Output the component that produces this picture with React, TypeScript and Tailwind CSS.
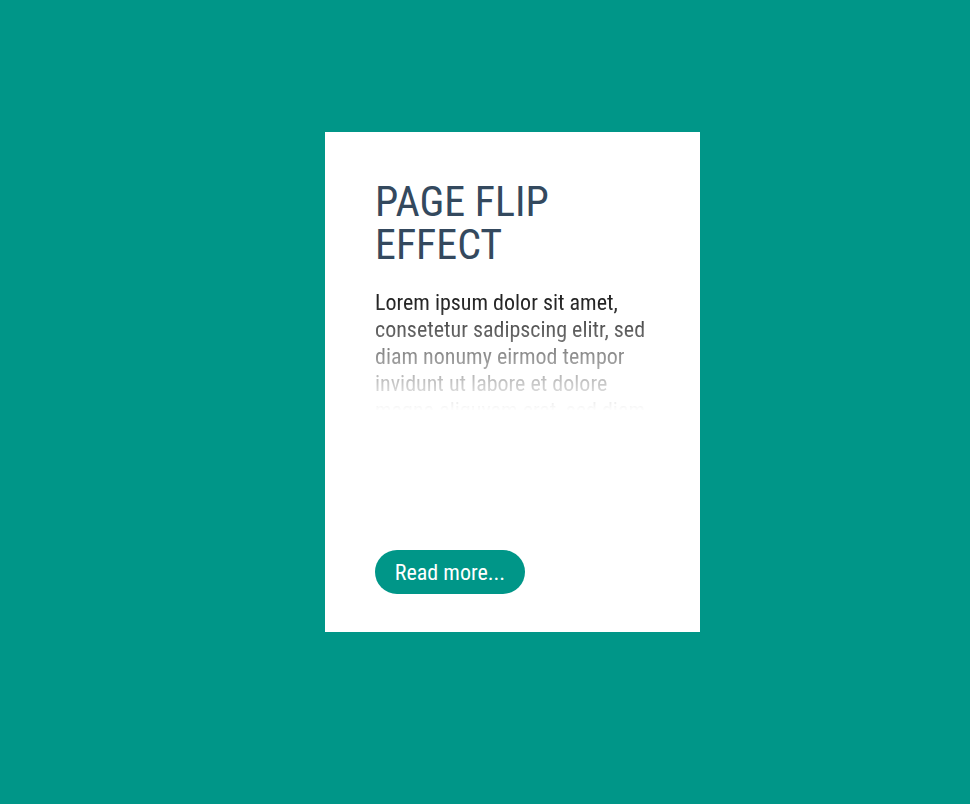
export default function App() {
  return (
    <div className="min-h-[804px] w-full bg-[#009688] pl-[325px] pt-[132px] [font-family:'Roboto_Condensed',Roboto,sans-serif] [font-stretch:condensed]">
      <div className="flex h-[500px] w-[375px] flex-col bg-white px-[50px] pt-[48px]">
        <h1 className="text-[42px] font-normal uppercase leading-[43px] text-[#34495e]">
          Page flip effect
        </h1>
        <p className="mt-[23px] h-[128px] overflow-hidden text-[22px] font-normal leading-[27px] text-[#222] [mask-image:linear-gradient(to_bottom,black_10%,transparent_95%)]">
          Lorem ipsum dolor sit amet, consetetur sadipscing elitr, sed diam nonumy eirmod tempor
          invidunt ut labore et dolore magna aliquyam erat, sed diam voluptua.
        </p>
        <button className="mt-auto mb-[38px] h-[44px] w-[150px] rounded-full bg-[#009688] text-[22px] font-normal text-white">
          Read more...
        </button>
      </div>
    </div>
  );
}
